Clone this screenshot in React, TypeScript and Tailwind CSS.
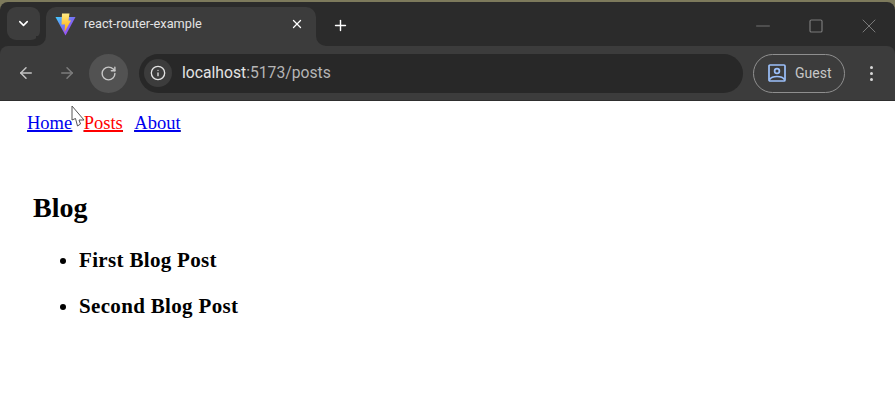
import { ArrowLeft, ArrowRight, ChevronDown, Info, Minus, Plus, RotateCw, Square, X } from "lucide-react";

function ViteLogo() {
  return (
    <svg width="21" height="23" viewBox="0 0 21 23" className="mt-[1px]">
      <defs>
        <linearGradient id="vite-a" x1="0" y1="0" x2="1" y2="1">
          <stop offset="0" stopColor="#41d1ff" />
          <stop offset="0.5" stopColor="#7a6cf5" />
          <stop offset="1" stopColor="#bd34fe" />
        </linearGradient>
        <linearGradient id="vite-b" x1="0" y1="0" x2="0" y2="1">
          <stop offset="0" stopColor="#ffea83" />
          <stop offset="1" stopColor="#ffa800" />
        </linearGradient>
      </defs>
      <path d="M0.5 4 L20.5 4 L10.5 22.5 Z" fill="url(#vite-a)" />
      <path d="M7 0.5 L14.5 0.5 L13.5 7.5 L16 7.5 L9.5 19 L10 11.5 L6.5 11.5 Z" fill="url(#vite-b)" />
    </svg>
  );
}

function GuestIcon() {
  return (
    <svg width="18" height="18" viewBox="0 0 18 18" fill="none" stroke="#9cc0fa" strokeWidth="1.7">
      <rect x="1" y="1" width="16" height="16" rx="1" />
      <circle cx="9" cy="7" r="2.4" />
      <path d="M1.5 15.5 C4 11.5 14 11.5 16.5 15.5" />
    </svg>
  );
}

function Cursor() {
  return (
    <svg className="absolute left-[71px] top-[105px]" width="16" height="24" viewBox="0 0 16 24">
      <path
        d="M1 1 L1 15 L4.5 13.5 L6.5 21 L9.5 19 L8 15 L13 15 Z"
        fill="#fff"
        stroke="#555"
        strokeWidth="1"
      />
    </svg>
  );
}

export default function App() {
  return (
    <div className="relative h-[409px] w-[895px] overflow-hidden bg-white font-['Liberation_Sans',sans-serif]">
      <div className="bg-[#7d7a5c] pt-[2px]">
        <div className="rounded-t-[8px] bg-[#2b2b2b]">
          <div className="flex h-[44px] items-start pl-[7px] pt-[5px]">
            <div className="flex h-[33px] w-[33px] items-center justify-center rounded-[9px] bg-[#3d3d3d] text-white">
              <ChevronDown size={15} strokeWidth={2.5} />
            </div>
            <div className="relative ml-[6px] flex h-[39px] w-[270px] items-center rounded-t-[10px] bg-[#3c3c3c] pb-[6px] pl-[9px] pr-[12px]">
              <div className="absolute bottom-0 -left-[10px] h-[10px] w-[10px] bg-[#3c3c3c]">
                <div className="h-full w-full rounded-br-[10px] bg-[#2b2b2b]" />
              </div>
              <div className="absolute bottom-0 -right-[10px] h-[10px] w-[10px] bg-[#3c3c3c]">
                <div className="h-full w-full rounded-bl-[10px] bg-[#2b2b2b]" />
              </div>
              <ViteLogo />
              <span className="ml-[8px] flex-1 font-['Roboto',sans-serif] text-[12.75px] text-[#e3e3e3]">react-router-example</span>
              <X size={14} strokeWidth={2.2} className="text-white" />
            </div>
            <Plus size={17} strokeWidth={2} className="ml-[16px] mt-[10px] text-white" />
            <div className="ml-auto mt-[7px] flex items-center text-[#7a7a7a]">
              <div className="flex w-[53px] justify-center">
                <Minus size={22} strokeWidth={1} />
              </div>
              <div className="flex w-[53px] justify-center">
                <Square size={16} strokeWidth={1.8} />
              </div>
              <div className="flex w-[53px] justify-center">
                <X size={24} strokeWidth={1} />
              </div>
            </div>
          </div>
          <div className="flex h-[55px] items-center rounded-t-[8px] border-b border-[#2e2e2e] bg-[#3c3c3c] pl-[17px] pr-[15px]">
            <ArrowLeft size={18} strokeWidth={2} className="text-[#c4c4c4]" />
            <ArrowRight size={18} strokeWidth={2} className="ml-[23px] text-[#7c7c7c]" />
            <div className="ml-[13px] flex h-[39px] w-[39px] items-center justify-center rounded-full bg-[#525252] text-[#c7c7c7]">
              <RotateCw size={17} strokeWidth={2} />
            </div>
            <div className="ml-[11px] flex h-[39px] w-[604px] items-center rounded-full bg-[#282828] pl-[5px]">
              <div className="flex h-[28px] w-[28px] items-center justify-center rounded-full bg-[#3c3c3c] text-[#e3e3e3]">
                <Info size={16} strokeWidth={2} />
              </div>
              <span className="ml-[10px] font-['Roboto',sans-serif] text-[15.7px] text-[#e3e3e3]">
                localhost<span className="text-[#b5b5b5]">:5173/posts</span>
              </span>
            </div>
            <div className="ml-[10px] flex h-[39px] w-[92px] items-center rounded-full border border-[#8f8f8f] pl-[14px]">
              <GuestIcon />
              <span className="ml-[9px] font-['Roboto',sans-serif] text-[14px] text-[#c7c7c7]">Guest</span>
            </div>
            <div className="ml-auto flex flex-col gap-[3px] pr-[7px]">
              <div className="h-[3px] w-[3px] rounded-full bg-[#d8d8d8]" />
              <div className="h-[3px] w-[3px] rounded-full bg-[#d8d8d8]" />
              <div className="h-[3px] w-[3px] rounded-full bg-[#d8d8d8]" />
            </div>
          </div>
        </div>
      </div>
      <div className="font-['Liberation_Serif',serif] text-black">
        <nav className="flex gap-[11.5px] pl-[27px] pt-[11px] text-[18.5px] leading-[22px] underline decoration-[1.5px]">
          <a className="text-[#0000ee]">Home</a>
          <a className="text-[#ff0000]">Posts</a>
          <a className="text-[#0000ee]">About</a>
        </nav>
        <h1 className="ml-[33px] mt-[58px] text-[28px] font-bold leading-[32px]">Blog</h1>
        <ul className="ml-[79px] mt-[24px] list-disc text-[21px] font-bold leading-[24px] tracking-[0.33px]">
          <li className="mb-[22px]">First Blog Post</li>
          <li>Second Blog Post</li>
        </ul>
      </div>
      <Cursor />
    </div>
  );
}
